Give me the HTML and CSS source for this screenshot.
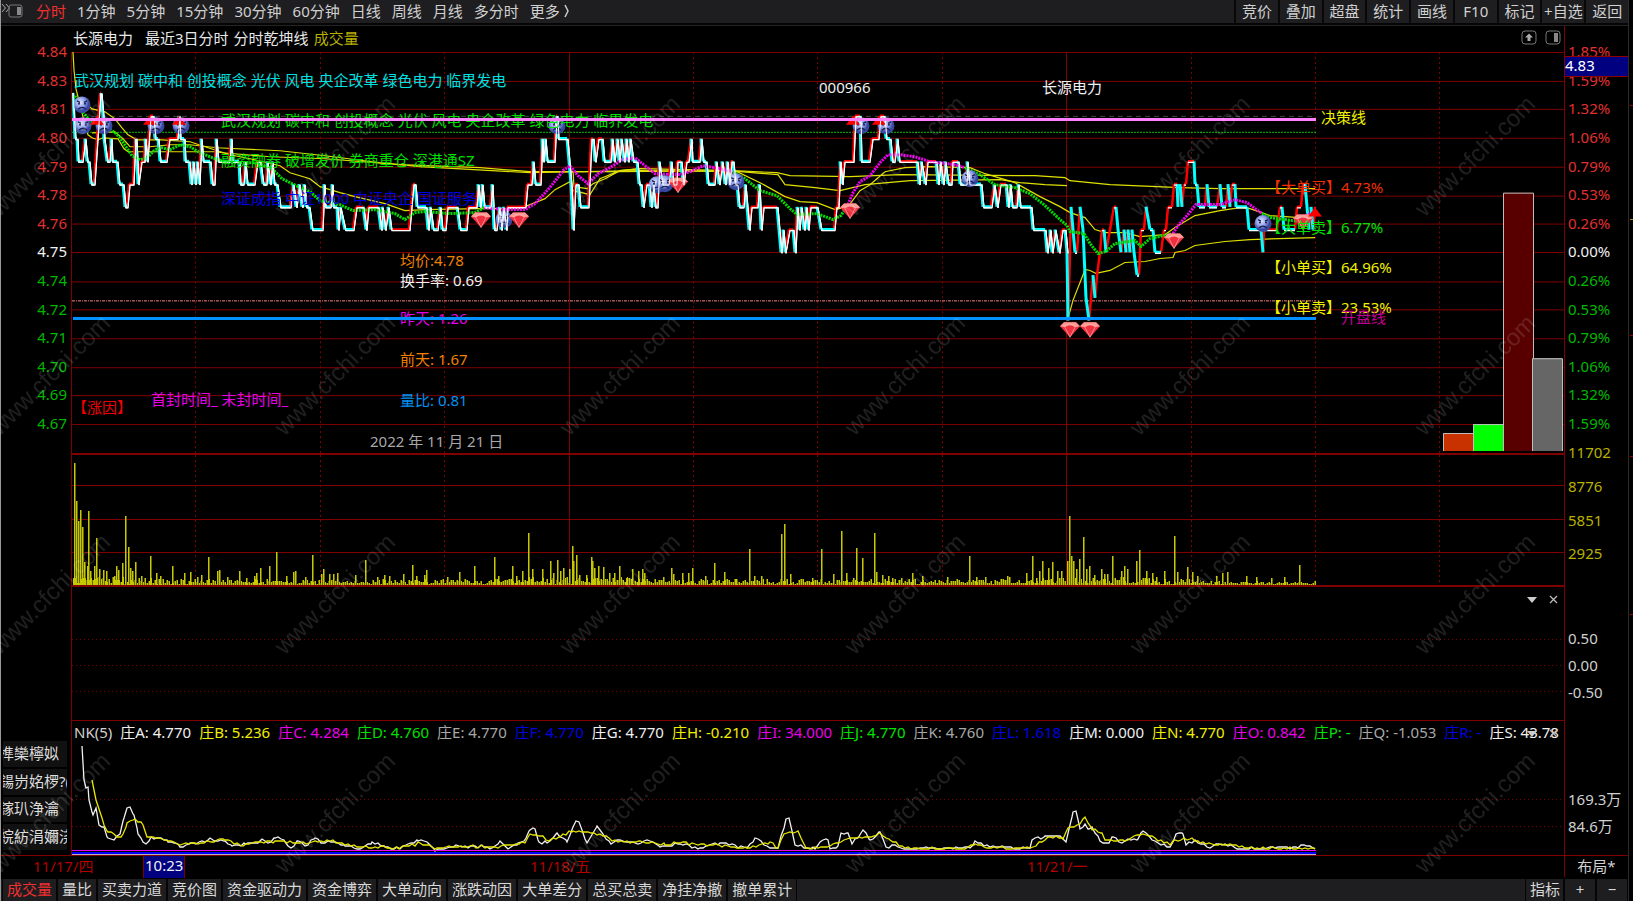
FILE: index.html
```
<!DOCTYPE html>
<html lang="zh-CN">
  <head>
    <meta charset="utf-8">
    <title>长源电力 000966 分时</title>
    <link rel="stylesheet" href="styles.css">
  </head>
  <body>
    <div class="app">
      <nav class="toolbar">
        <button class="dock" aria-label="侧栏">
          <svg width="23" height="16" viewBox="0 0 23 16"><path d="M1 1l3.500 4-3.500 4M5 1l3.500 4L5 9" fill="none" stroke="#aaa"/><rect x="8" y="2" width="13" height="12" rx="2" fill="none" stroke="#777"/><rect x="16" y="4" width="4" height="8" fill="#888"/></svg>
        </button>
        <div class="periods">
          <button class="on">分时</button>
          <button>1分钟</button>
          <button>5分钟</button>
          <button>15分钟</button>
          <button>30分钟</button>
          <button>60分钟</button>
          <button>日线</button>
          <button>周线</button>
          <button>月线</button>
          <button>多分时</button>
          <button>更多<svg class="more" width="12" height="16" viewBox="0 0 12 16"><path d="M5 2l3 6-3 6" fill="none" stroke="#ccc" stroke-width="1.500"/></svg></button>
        </div>
        <div class="tools">
          <button>竞价</button>
          <button>叠加</button>
          <button>超盘</button>
          <button>统计</button>
          <button>画线</button>
          <button>F10</button>
          <button>标记</button>
          <button>+自选</button>
          <button>返回</button>
        </div>
      </nav>

      <main class="panels">
        <section class="panel price">
          <div class="head title">
            <span>长源电力</span>
            <span class="period">最近3日分时</span>
            <span>分时乾坤线</span>
            <span class="olive">成交量</span>
            <div class="head-icons">
              <button aria-label="上移"><svg width="16" height="16" viewBox="0 0 16 16"><rect x="1" y="1" width="14" height="13" rx="3" fill="none" stroke="#777"/><path d="M8 3.500l4 4H9.500v3.500h-3V7.500H4z" fill="#aaa"/></svg></button>
              <button aria-label="分栏"><svg width="16" height="16" viewBox="0 0 16 16"><rect x="1" y="1" width="14" height="13" rx="3" fill="none" stroke="#777"/><rect x="9" y="3" width="4" height="9" fill="#888"/></svg></button>
            </div>
          </div>
          <div class="axis left">
            <span class="up">4.84</span><span class="up">4.83</span><span class="up">4.81</span><span class="up">4.80</span><span class="up">4.79</span><span class="up">4.78</span><span class="up">4.76</span><span>4.75</span><span class="down">4.74</span><span class="down">4.72</span><span class="down">4.71</span><span class="down">4.70</span><span class="down">4.69</span><span class="down">4.67</span><span></span>
          </div>
          <div class="plot">
            <svg id="price" viewBox="72 51 1492 402" preserveAspectRatio="none">
              <defs>
                <radialGradient id="ball" cx="40%" cy="35%">
                  <stop offset="0" stop-color="#e4eaff"/>
                  <stop offset="0.600" stop-color="#8c9ce8"/>
                  <stop offset="1" stop-color="#3848a0"/>
                </radialGradient>
                <g id="face">
                  <circle r="8.500" fill="url(#ball)"/>
                  <path d="M-5-4l3 1.500M5-4L2-2.500M-4 4.500q4-4 8 0" fill="none" stroke="#182050" stroke-width="1.300"/>
                  <circle cx="-3" cy="-1" r="1" fill="#182050"/><circle cx="3" cy="-1" r="1" fill="#182050"/>
                </g>
                <g id="gem">
                  <path d="M-10-3l4-4H6l4 4L0 8z" fill="#f03040"/>
                  <path d="M-10-3l4-4H6l4 4L5-2Q0-6-5-2z" fill="#ff9a94"/>
                  <path d="M-6-3Q0-7 6-3M-5-2L0 8 5-2" fill="none" stroke="#ffb0aa" stroke-width="0.700"/>
                </g>
                <path id="arrow" d="M0-6L7 3H-7z" fill="#f00"/>
              </defs>
            </svg>
            <div class="labels">
              <span class="themes cyan">武汉规划 碳中和 创投概念 光伏 风电 央企改革 绿色电力 临界发电</span>
              <span class="themes2 green">武汉规划 碳中和 创投概念 光伏 风电 央企改革 绿色电力 临界发电</span>
              <span class="margin green">融资融券 破增发价 券商重仓 深港通SZ</span>
              <span class="index blue">深证成指 中证1000 中证央企 国证服务</span>
              <span class="code">000966</span>
              <span class="name">长源电力</span>
              <span class="decide yellow">决策线</span>
              <span class="big-buy orange-red">【大单买】4.73%</span>
              <span class="big-sell green">【大单卖】6.77%</span>
              <span class="small-buy yellow">【小单买】64.96%</span>
              <span class="small-sell yellow">【小单卖】23.53%</span>
              <span class="open pink">开盘线</span>
              <span class="avg orange">均价:4.78</span>
              <span class="turnover">换手率: 0.69</span>
              <span class="yesterday magenta">昨天: 1.26</span>
              <span class="before orange">前天: 1.67</span>
              <span class="ratio sky">量比: 0.81</span>
              <span class="day grey">2022 年 11 月 21 日</span>
              <span class="reason red">【涨因】</span>
              <span class="seal magenta">首封时间_ 末封时间_</span>
            </div>
            <svg id="overlay" viewBox="72 51 1492 402" preserveAspectRatio="none"></svg>
          </div>
          <div class="axis right">
            <span class="up">1.85%</span><span class="up">1.59%</span><span class="up">1.32%</span><span class="up">1.06%</span><span class="up">0.79%</span><span class="up">0.53%</span><span class="up">0.26%</span><span>0.00%</span><span class="down">0.26%</span><span class="down">0.53%</span><span class="down">0.79%</span><span class="down">1.06%</span><span class="down">1.32%</span><span class="down">1.59%</span><span class="olive">11702</span>
            <b class="cursor-price">4.83</b>
          </div>
        </section>

        <section class="panel volume">
          <div class="plot">
            <svg id="volume" viewBox="72 453 1492 133" preserveAspectRatio="none"></svg>
          </div>
          <div class="axis right olive">
            <span></span><span>8776</span><span>5851</span><span>2925</span><span></span>
          </div>
        </section>

        <section class="panel aux">
          <div class="head">
            <div class="head-icons small">
              <button aria-label="菜单"><svg width="10" height="6" viewBox="0 0 10 6"><path d="M0 0h10L5 6z" fill="#ccc"/></svg></button>
              <button aria-label="关闭"><svg width="9" height="9" viewBox="0 0 9 9"><path d="M1 1l7 7M8 1L1 8" stroke="#bbb" stroke-width="1.300"/></svg></button>
            </div>
          </div>
          <div class="plot"><svg id="aux" viewBox="72 612 1492 108" preserveAspectRatio="none"></svg></div>
          <div class="axis right light">
            <span></span><span>0.50</span><span>0.00</span><span>-0.50</span><span></span>
          </div>
        </section>

        <section class="panel nk">
          <div class="side">
            <button>榫欒檸姒</button>
            <button>鍚岃姳椤?(</button>
            <button>鎵玐浄瀹</button>
            <button>綄紡涓嬭浇</button>
          </div>
          <div class="head values">
            <span class="light">NK(5)</span>
            <span>庄A: 4.770</span>
            <span class="yellow">庄B: 5.236</span>
            <span class="magenta">庄C: 4.284</span>
            <span class="green">庄D: 4.760</span>
            <span class="grey">庄E: 4.770</span>
            <span class="blue">庄F: 4.770</span>
            <span>庄G: 4.770</span>
            <span class="yellow">庄H: -0.210</span>
            <span class="magenta">庄I: 34.000</span>
            <span class="green">庄J: 4.770</span>
            <span class="grey">庄K: 4.760</span>
            <span class="blue">庄L: 1.618</span>
            <span>庄M: 0.000</span>
            <span class="yellow">庄N: 4.770</span>
            <span class="magenta">庄O: 0.842</span>
            <span class="green">庄P: -</span>
            <span class="grey">庄Q: -1.053</span>
            <span class="blue">庄R: -</span>
            <span>庄S: 43.78</span>
            <div class="head-icons small">
              <button aria-label="菜单"><svg width="10" height="6" viewBox="0 0 10 6"><path d="M0 0h10L5 6z" fill="#ccc"/></svg></button>
              <button aria-label="关闭"><svg width="9" height="9" viewBox="0 0 9 9"><path d="M1 1l7 7M8 1L1 8" stroke="#bbb" stroke-width="1.300"/></svg></button>
            </div>
          </div>
          <div class="plot"><svg id="nk" viewBox="72 746 1492 109" preserveAspectRatio="none"></svg></div>
          <div class="axis right light">
            <span></span><span></span><span>169.3万</span><span>84.6万</span><span></span>
          </div>
        </section>
      </main>

      <div class="dates">
        <div class="days">
          <span>11/17/四</span><span>11/18/五</span><span>11/21/一</span>
        </div>
        <b class="cursor-time">10:23</b>
        <button class="layout">布局*</button>
      </div>

      <nav class="tabs">
        <button class="on">成交量</button>
        <button>量比</button>
        <button>买卖力道</button>
        <button>竞价图</button>
        <button>资金驱动力</button>
        <button>资金博弈</button>
        <button>大单动向</button>
        <button>涨跌动因</button>
        <button>大单差分</button>
        <button>总买总卖</button>
        <button>净挂净撤</button>
        <button>撤单累计</button>
        <button class="indicator">指标</button>
        <button class="zoom">+</button>
        <button class="zoom">−</button>
      </nav>
    </div>

    <div class="edge">
      <svg width="4" height="640" viewBox="0 0 4 640"><path d="M1 105.500h3M1 335.500h3M1 456.500h3M1 614.500h3" stroke="#900"/><path d="M1 219.500h3" stroke="#b80"/></svg>
    </div>

    <svg class="watermark" width="100%" height="100%">
      <defs>
        <pattern id="mark" width="285" height="219" x="-92" y="-1" patternUnits="userSpaceOnUse">
          <text x="142" y="117" transform="rotate(-45 142 109)" text-anchor="middle">www.cfchi.com</text>
        </pattern>
      </defs>
      <rect width="100%" height="100%" fill="url(#mark)"/>
    </svg>

    <script src="chart.js"></script>
  </body>
</html>
```
FILE: styles.css
```
* { box-sizing: border-box; }
body { margin: 0; height: 100vh; display: flex; overflow: hidden; background: #000; color: #f0f0f0; font: 15px/20px "Noto Sans", "Noto Sans CJK SC", sans-serif; border-left: 1px solid #999; }
button { margin: 0; padding: 0; border: 0; background: none; color: inherit; font: inherit; white-space: nowrap; cursor: pointer; }
svg { display: block; }

.app { flex: 1; min-width: 0; display: flex; flex-direction: column; }
.edge { width: 5px; border-left: 1px solid #2a2a2a; }

/* top toolbar */
.toolbar { flex: none; height: 25px; display: flex; background: #1e1e20; border-bottom: 2px solid #050505; color: #d0d0d0; }
.toolbar button { padding-bottom: 2px; }
.dock { width: 29px; }
.periods { flex: 1; display: flex; gap: 11px; padding-left: 6px; }
.periods button { display: flex; align-items: center; }
.on { color: #f03030; }
.tools { width: 394px; display: flex; }
.tools button { flex: 1 1 0; min-width: 0; border-left: 2px solid #080808; overflow: hidden; }

/* panels: left axis, plot, right axis */
.panels { flex: 1; min-height: 0; display: flex; flex-direction: column; }
.panel { min-height: 0; display: grid; grid-template-columns: 70px minmax(0, 1fr) 63px; grid-template-rows: 26px minmax(0, 1fr); }
.price { flex: 402 0 26px; border-top: 1px solid #242424; }
.volume { flex: 133 0 0px; grid-template-rows: 0 minmax(0, 1fr); }
.aux { flex: 108 0 26px; }
.nk { flex: 109 0 26px; }
.head { grid-column: 2; grid-row: 1; position: relative; display: flex; align-items: center; border: 0 solid #800000; border-width: 1px 1px 0; white-space: nowrap; overflow: hidden; }
.plot { grid-column: 2; grid-row: 2; position: relative; border: 0 solid #800000; border-width: 0 1px; }
.plot > svg { position: absolute; width: 100%; height: 100%; }
.title { padding: 0 0 3px 2px; gap: 5px; border-width: 0 1px 0 0; color: #e8e8e8; }
.period { margin-left: 7px; }
.values { gap: 8px; padding: 0 0 4px 2px; }
.values span { flex: none; }
.head-icons { position: absolute; right: 3px; top: 4px; display: flex; gap: 8px; }
.small { right: 6px; top: 0; bottom: 0; gap: 12px; align-items: center; }

.axis { grid-row: 2; margin: -15px 0 -13px; display: flex; flex-direction: column; position: relative; }
.axis span { flex: 1 1 0; min-height: 0; display: flex; align-items: center; }
.left { grid-column: 1; align-items: flex-end; padding-right: 4px; }
.right { grid-column: 3; padding-left: 3px; }
.volume .axis { margin: -17px 0; }
.nk .axis { margin: -16px 0 -12px; }
.cursor-price { position: absolute; left: 0; right: 0; top: 19px; height: 21px; line-height: 17px; background: #000080; border: 1px solid #900000; border-width: 1px 0; font-weight: 400; color: #fff; }

.side { grid-column: 1; grid-row: 1 / 3; display: flex; flex-direction: column; gap: 2px; padding: 21px 4px 5px 2px; }
.side button { flex: 1; min-height: 0; padding-bottom: 2px; background: #111; overflow: hidden; text-align: left; text-indent: -4px; color: #ddd; }

/* text over the price plot */
.labels span { position: absolute; white-space: nowrap; }
.themes { left: 2px; top: 18px; }
.themes2 { left: 149px; top: 58px; }
.margin { left: 149px; top: 98px; }
.index { left: 149px; top: 136px; }
.code { left: 747px; top: 25px; }
.name { left: 970px; top: 25px; }
.decide { left: 1249px; top: 55px; }
.big-buy { left: 1194px; top: 125px; }
.big-sell { left: 1194px; top: 165px; }
.small-buy { left: 1194px; top: 205px; }
.small-sell { left: 1194px; top: 245px; }
.open { left: 1269px; top: 255px; }
.avg { left: 328px; top: 198px; }
.turnover { left: 328px; top: 218px; }
.yesterday { left: 328px; top: 256px; }
.before { left: 328px; top: 297px; }
.ratio { left: 328px; top: 338px; }
.day { left: 298px; top: 379px; }
.reason { left: 0; top: 345px; }
.seal { left: 79px; top: 337px; }

.up { color: #e03030; }
.down { color: #00b800; }
.olive { color: #b8b000; }
.light { color: #d0d0d0; }
.grey { color: #a8a8a8; }
.cyan { color: #00e0e0; }
.green { color: #00e000; }
.blue { color: #0000e0; }
.sky { color: #0090f0; }
.yellow { color: #f0f000; }
.orange { color: #f08000; }
.orange-red { color: #f03000; }
.red { color: #f00000; }
.magenta { color: #e800e8; }
.pink { color: #c00090; }

/* date axis */
.dates { flex: none; height: 22px; position: relative; display: flex; align-items: center; border-top: 1px solid #800000; }
.days { flex: 1; display: flex; margin-left: 32px; padding-bottom: 2px; color: #b00000; }
.days span { flex: 1; }
.layout { width: 64px; height: 21px; padding-bottom: 3px; border-left: 1px solid #800000; color: #d0d0d0; margin-left: 40px; }
.cursor-time { position: absolute; left: 142px; top: 0; height: 22px; line-height: 18px; padding: 0 1px; background: #000080; border: 1px solid #800000; border-width: 0 1px; font-weight: 400; }

/* indicator tabs */
.tabs { flex: none; height: 24px; display: flex; background: #1e1e20; border-top: 2px solid #000; padding-left: 1px; color: #d8d8d8; }
.tabs button { padding: 0 4px 2px; border: 0 solid #050505; border-width: 0 1px; }
.tabs .indicator { margin-left: auto; width: 39px; }
.tabs .zoom { width: 32px; }

.watermark { position: fixed; left: 0; top: 48px; pointer-events: none; }
.watermark text { font: 24px "Liberation Sans", sans-serif; fill: #fff; fill-opacity: 0.12; }
```
FILE: chart.js
```
var NS = 'http://www.w3.org/2000/svg';

function add(id, tag, attrs) {
  var el = document.createElementNS(NS, tag);
  for (var k in attrs) el.setAttribute(k, attrs[k]);
  document.getElementById(id).appendChild(el);
  return el;
}

function line(id, d, color, width, dash, crisp) {
  add(id, 'path', {
    d: d, fill: 'none', stroke: color, 'stroke-width': width || 1,
    'stroke-dasharray': dash || 'none',
    'shape-rendering': crisp === false ? 'auto' : 'crispEdges'
  });
}

function curve(id, pts, color, width, dash) {
  line(id, 'M' + pts, color, width, dash, false);
}

function noise(n) {
  return Math.abs(Math.sin(n * 12.9898) * 43758.5453) % 1;
}

var GRID = '#800000';

function columns(id, top, bottom) {
  for (var i = 1; i < 12; i++) {
    var x = Math.round(71 + i * 124.4) + 0.5;
    var solid = i % 4 === 0;
    line(id, 'M' + x + ' ' + top + 'V' + bottom, GRID, 1, solid ? '' : '2 3');
  }
}

// ---- price panel ----
columns('price', 51, 453);
for (var r = 0; r < 14; r++) {
  var gy = Math.round(51 + r * 28.7) + 0.5;
  if (r === 7) line('price', 'M72 252H1564', GRID, 2);
  else line('price', 'M72 ' + gy + 'H1564', GRID);
}
line('price', 'M92 115.5H1316', '#444', 1, '5 4');
line('price', 'M72 131.5H1316', '#00c000', 1, '2 1');
line('price', 'M72 300.5H1316', '#ff8080', 1, '3 1 1 1');

// statistics bars in the corner
[[1443, 433, '#c83200'], [1473, 424, '#00ff00'], [1503, 192, '#580000'], [1532, 358, '#666666']].forEach(function(b) {
  add('price', 'rect', { x: b[0], y: b[1], width: 30, height: 451 - b[1], fill: b[2] });
  line('price', 'M' + (b[0] + 0.5) + ' 451V' + (b[1] + 0.5) + 'h30V451', '#c0c0c0');
});

// x and tick level; one level is one cent
var ticks = '73,-1 75,1 77,1 78,2 82,2 85,1 87,2 89,2 91,3 94,3 97,1 100,-1 101,-1 103,0 104,1 107,2 109,2 111,1 112,2 117,2 119,3 123,3 125,4 127,4 129,3 133,3 135,1 136,1 138,3 141,2 144,2 145,1 147,2 150,0 153,0 155,1 158,1 160,2 166,2 169,1 177,1 179,0 180,1 184,1 185,2 189,2 191,3 193,2 195,3 197,2 199,3 201,1 203,2 210,2 212,3 214,3 216,1 218,2 229,2 231,1 232,2 239,2 240,3 243,3 245,2 247,3 254,3 257,2 260,2 263,3 266,3 267,2 270,3 272,2 274,3 277,3 280,4 290,4 293,3 296,4 299,3 302,4 304,3 306,4 309,4 312,5 322,5 324,3 325,4 330,4 332,3 333,4 337,4 338,5 340,4 345,5 353,5 356,4 363,4 366,5 368,4 378,4 381,5 382,4 385,5 388,4 391,5 409,5 411,4 413,3 415,3 417,4 426,4 428,5 430,4 433,5 437,5 440,4 442,5 445,5 447,4 457,4 460,5 466,5 468,4 476,4 478,3 480,4 482,3 484,4 490,4 492,3 494,5 496,5 499,4 501,5 503,4 506,5 507,4 525,4 527,3 531,3 533,2 535,3 540,3 542,1 543,2 545,1 547,2 554,2 556,0 557,0 558,1 567,1 569,2 571,3 573,5 575,3 578,3 580,4 588,4 591,1 593,1 595,2 598,1 602,1 604,2 610,2 612,1 614,2 617,1 619,2 621,1 624,2 626,1 628,2 630,1 633,2 637,2 639,3 641,3 643,4 646,3 649,3 651,4 653,3 655,4 657,4 659,2 662,3 668,3 671,2 673,3 676,3 677,2 681,2 683,3 686,2 688,2 691,1 692,2 699,2 701,1 703,2 706,2 708,3 714,3 716,2 719,3 722,2 725,3 727,2 729,3 731,2 733,2 735,3 737,3 739,4 743,4 745,3 747,4 749,5 751,4 757,4 759,3 761,5 763,4 777,4 779,5 781,6 783,5 785,6 789,5 793,5 795,6 797,4 799,5 801,4 804,5 806,4 808,5 810,4 817,4 821,5 834,5 836,4 838,4 840,2 842,3 844,2 853,2 855,0 860,0 861,2 869,2 872,1 878,1 880,0 884,0 886,1 890,1 892,2 894,2 897,1 899,2 917,2 919,3 921,2 925,3 927,2 936,2 938,3 940,2 943,3 945,2 948,3 951,3 952,2 958,2 960,3 966,3 967,2 969,3 981,3 983,4 991,4 994,3 997,4 1000,3 1006,3 1008,4 1010,3 1012,4 1016,4 1018,3 1020,4 1031,4 1033,5 1045,5 1047,6 1050,5 1052,6 1055,5 1059,6 1062,5 1065,5 1067,6 1068,9 1070,6 1071,4 1075,6 1077,6 1080,4 1083,5 1084,6 1086,8 1089,9 1091,8 1093,7 1095,8 1097,7 1100,6 1102,5 1104,5 1106,6 1110,5 1114,4 1116,4 1118,5 1121,6 1124,5 1126,6 1128,5 1130,6 1132,5 1134,6 1137,7 1139,7 1141,5 1144,5 1146,4 1150,5 1153,5 1155,6 1161,6 1164,5 1166,5 1168,4 1172,4 1174,3 1177,3 1178,4 1180,3 1182,4 1184,3 1186,3 1188,2 1194,2 1195,3 1197,3 1199,4 1205,4 1207,3 1209,4 1217,4 1220,3 1222,4 1226,4 1228,3 1230,4 1232,3 1235,3 1236,4 1247,4 1249,5 1261,5 1263,6 1264,5 1277,5 1280,4 1282,4 1284,5 1295,5 1297,4 1301,4 1303,3 1305,3 1307,4 1309,5 1311,4 1313,5 1315,4';
var pts = ticks.split(' ').map(function(p) {
  var a = p.split(',');
  return [+a[0], 115 + a[1] * 22.8];
});
var up = '', down = '', white = 'M73 92', late = '';
var rising = false;
for (var i = 1; i < pts.length; i++) {
  var a = pts[i - 1], b = pts[i];
  var seg = 'M' + a + 'L' + b;
  if (b[1] < a[1]) { up += seg; rising = true; }
  else if (b[1] > a[1]) { down += seg; rising = false; }
  else if (rising || b[0] - a[0] > 14) up += seg;
  else down += seg;
  if (b[0] < 1068) white += 'L' + (b[0] + 1) + ' ' + (b[1] + 1);
  else if (a[1] === b[1]) late += 'M' + a[0] + ' ' + (a[1] + 1) + 'H' + b[0];
}

var averages = [
  '73,51 74,69 76,88 79,100 84,120 88,134 92,137 98,139 103,137 118,138 124,148 128,151 216,151 222,152 270,156 325,158 400,164 480,167 530,171 620,171 733,170 777,172 790,175 850,176 900,174 1035,175 1065,177 1070,180 1110,184 1180,187 1220,188 1315,188',
  '80,97 92,108 105,111 115,118 122,127 128,134 137,139 162,139 190,141 205,146 230,154 250,158 280,165 290,172 310,178 320,186 340,192 355,196 385,203 405,210 425,209 480,208 520,208 545,198 555,189 570,181 573,190 590,194 600,178 620,170 640,168 735,170 760,182 785,196 800,201 817,202 835,209 848,206 860,190 870,184 885,171 905,167 930,166 970,167 985,173 1015,182 1040,196 1060,206 1070,212 1085,217 1095,229 1105,232 1125,232 1140,236 1165,234 1175,227 1195,215 1220,210 1240,207 1250,208 1270,215 1315,218',
  '92,132 115,131 123,138 130,146 150,146 170,144 190,144 217,147 280,150 325,155 380,162 420,166 530,172 640,170 740,171 778,174 785,184 815,187 840,190 865,184 910,180 1000,179 1020,182 1045,184 1067,185',
  '573,170 574,186 587,188 593,183 605,178 620,170 640,168',
  '1068,318 1073,300 1082,277 1085,269 1090,270 1096,273 1110,270 1125,262 1145,261 1160,258 1173,257 1175,252 1185,250 1195,245 1225,241 1250,239 1315,237'
];
averages.forEach(function(p) { curve('price', p, '#e0e000', 1.2); });

line('price', up, '#ff0000', 2.5, '', false);
line('price', down, '#00ffff', 3, '', false);
line('price', white + late, '#ffffff', 1.2, '', false);

[
  '75,95 82,110 90,120 97,122 105,125 115,132 120,137 126,146 132,155 140,159 147,157 155,149 162,147 170,149 180,144 190,146 200,152 215,158 230,162 255,162 272,168 282,178 298,186 310,191 320,200 340,204 353,210 375,209 395,213 405,219 415,212 425,211 450,213 475,212 484,207',
  '733,171 745,178 760,190 777,195 790,208 797,214 817,213 833,219 841,215 848,204',
  '965,167 980,174 995,184 1015,187 1030,193 1045,205 1060,219 1067,225 1070,231 1084,233 1090,243 1098,253 1106,251 1115,243 1135,240 1141,246 1150,238 1173,233',
  '1262,213 1270,217 1285,219 1300,221'
].forEach(function(p) { curve('price', p, '#00e000', 3, '2 1'); });
[
  '484,207 505,209 525,209 535,203 548,189 557,178 563,170 570,165 578,175 588,183 598,173 610,167 622,159 635,157 645,165 655,173 680,174 690,171 703,165 715,167 733,171',
  '848,204 853,192 860,181 870,175 880,162 888,154 900,154 915,156 930,161 955,164 965,167',
  '1173,233 1178,225 1187,215 1196,204 1220,204 1235,199 1247,202 1262,213',
  '1300,217 1308,214 1315,212'
].forEach(function(p) { curve('price', p, '#f000f0', 3, '2 1'); });

function marks(shape, list) {
  list.forEach(function(p) { add('price', 'use', { href: '#' + shape, x: p[0], y: p[1] }); });
}
marks('face', [[82, 104], [83, 125], [104, 125], [156, 125], [181, 125], [504, 219], [557, 125], [657, 184], [665, 183], [736, 181], [861, 125], [886, 125], [970, 178], [1263, 223]]);
marks('gem', [[481, 219], [519, 219], [678, 184], [850, 210], [1174, 240], [1070, 329], [1090, 329], [1303, 221]]);
marks('arrow', [[97, 121], [150, 121], [179, 121], [853, 121], [879, 121], [1315, 213]]);
// the line stays readable where a marker covers it
line('price', white, '#ffffff', 1, '', false);

// decision line and open line run over the labels
line('overlay', 'M72 118.5H1316', '#ff80ff', 3);
line('overlay', 'M73 318.5H1316', '#0090ff', 3);

// ---- volume panel ----
columns('volume', 455, 586);
line('volume', 'M72 454H1564', GRID, 2);
line('volume', 'M72 485.5H1564M72 519.5H1564M72 552.5H1564', GRID);

var peaks = '74:123 76:85 78:65 80:76 82:59 84:24 87:20 88:75 90:15 94:20 96:48 99:17 103:16 106:15 114:10 116:20 118:16 122:23 125:70 128:39 130:18 132:15 135:24 141:10 150:30 156:13 160:10 172:20 184:13 190:14 197:9 201:11 208:29 217:15 219:16 227:9 239:15 246:8 254:10 256:13 260:18 269:20 276:34 286:10 293:14 295:15 305:9 312:31 321:12 323:17 329:12 333:12 337:13 355:11 365:26 377:9 384:11 389:10 403:12 412:21 416:10 424:11 426:16 447:9 459:14 474:20 494:29 498:10 512:20 516:10 522:15 528:53 532:17 542:17 550:25 553:13 557:26 560:15 563:18 569:17 572:40 573:25 576:31 579:11 586:11 591:29 592:25 594:18 598:20 603:19 609:13 614:13 619:20 626:8 632:17 638:15 642:17 644:13 663:9 671:18 673:12 682:13 688:13 692:18 705:10 714:23 724:14 736:7 749:37 754:10 761:10 781:52 784:62 790:12 812:8 821:37 833:12 841:55 846:13 853:8 856:38 862:28 874:53 876:14 882:11 888:10 892:8 901:8 912:13 922:10 947:9 969:30 976:9 985:9 1001:7 1007:10 1009:9 1026:13 1032:30 1036:8 1039:15 1042:25 1048:18 1052:24 1057:15 1061:15 1067:25 1069:70 1071:30 1073:25 1076:17 1079:27 1083:49 1086:17 1089:20 1094:11 1101:17 1104:12 1107:12 1112:30 1121:15 1124:20 1127:17 1136:25 1139:36 1146:15 1152:13 1156:9 1164:15 1174:50 1177:14 1187:19 1192:14 1197:10 1216:10 1222:13 1227:14 1246:10 1256:9 1271:8 1284:9 1299:21 1316:5';
var heights = {};
peaks.split(' ').forEach(function(p) {
  var a = p.split(':');
  heights[a[0]] = +a[1];
});
var bars = '', dim = '';
for (var x = 73; x < 1316; x++) {
  var base = x < 160 ? 7 : x > 1200 ? 3 : (x > 525 && x < 650) || (x > 1040 && x < 1150) ? 7 : 5;
  var h = heights[x] || Math.round(2 + noise(x - x % 2) * base);
  if (heights[x] || x % 2) bars += 'M' + (x + 0.5) + ' 586v-' + h;
  else dim += 'M' + (x + 0.5) + ' 586v-' + h;
  // shaded side of a tall bar
  if (heights[x]) dim += 'M' + (x + 1.5) + ' 586v-' + h;
}
line('volume', dim, '#686800');
line('volume', bars, '#c8c800');
line('volume', 'M72 585.5H1564', GRID);

// ---- empty panel ----
line('aux', 'M72 639.5H1564M72 665.5H1564M72 691.5H1564', GRID, 1, '1 3');

// ---- NK panel ----
// walks between the key points in small uneven steps
function stepped(pts, seed) {
  var p = pts.split(' ').map(function(s) { return s.split(',').map(Number); });
  var d = p[0].join(' ');
  for (var i = 1; i < p.length; i++) {
    var dx = p[i][0] - p[i - 1][0], dy = p[i][1] - p[i - 1][1];
    for (var x = 3; x < dx; x += 3) {
      var y = p[i - 1][1] + dy * x / dx + (noise(seed + p[i][0] + x) - 0.5) * 3;
      d += 'L' + (p[i - 1][0] + x) + ' ' + Math.min(849, Math.round(y));
    }
    d += 'L' + p[i].join(' ');
  }
  return d;
}

line('nk', 'M72 799.5H1564M72 826.5H1564', GRID, 1, '1 3');
curve('nk', stepped('82,746 84,780 86,788 88,787 89,800 93,815 96,808 99,825 104,827 108,838 114,840 120,834 124,818 127,808 130,807 134,815 138,834 143,842 146,844 151,837 158,838 168,842 175,843 180,847 190,843 205,842 210,838 215,841 225,841 232,846 245,844 255,843 262,839 268,843 275,838 278,837 285,842 291,848 298,841 305,846 315,838 322,843 332,842 345,846 362,848 372,842 385,847 400,849 408,844 418,841 428,843 435,851 450,847 475,846 492,848 500,841 508,849 518,843 526,838 530,830 535,829 539,842 547,843 557,833 567,842 576,821 579,822 587,843 597,826 611,844 620,840 635,843 647,840 660,847 680,844 700,848 720,843 747,848 755,838 770,848 778,848 786,819 789,818 795,845 815,849 820,842 828,840 830,849 838,846 841,833 848,833 852,844 863,830 870,840 880,832 886,847 895,845 905,849 970,848 975,841 990,847 1030,848 1032,840 1045,836 1060,836 1066,842 1073,812 1076,811 1080,829 1085,824 1089,829 1092,827 1100,841 1109,843 1113,837 1122,843 1128,839 1138,839 1143,831 1152,840 1170,847 1176,834 1183,834 1186,845 1195,840 1207,847 1225,844 1240,849 1275,848 1298,848 1304,845 1315,849', 1), '#f0f0f0', 1.3);
curve('nk', stepped('92,780 96,800 104,825 108,832 118,837 123,834 127,823 135,819 143,825 147,837 165,840 180,845 205,842 225,840 240,845 275,841 300,843 330,841 360,847 400,848 420,843 437,848 470,846 495,847 525,843 530,834 540,836 550,840 560,837 573,831 585,832 600,834 618,842 640,841 665,845 680,843 710,845 747,848 770,842 778,848 784,834 798,831 806,848 818,848 838,843 850,838 875,836 880,833 890,840 905,848 965,849 975,844 988,848 1030,848 1050,837 1063,839 1068,828 1080,824 1085,817 1092,830 1102,833 1105,840 1125,841 1143,834 1155,838 1170,845 1175,840 1192,838 1200,843 1215,845 1230,844 1245,848 1315,849', 7), '#e8e800', 1.3);
line('nk', 'M72 850.5H1316', '#f000f0');
line('nk', 'M72 852.5H1316', '#0000ff', 2);
line('nk', 'M72 854.5H1316', '#c0b0c0');
```
